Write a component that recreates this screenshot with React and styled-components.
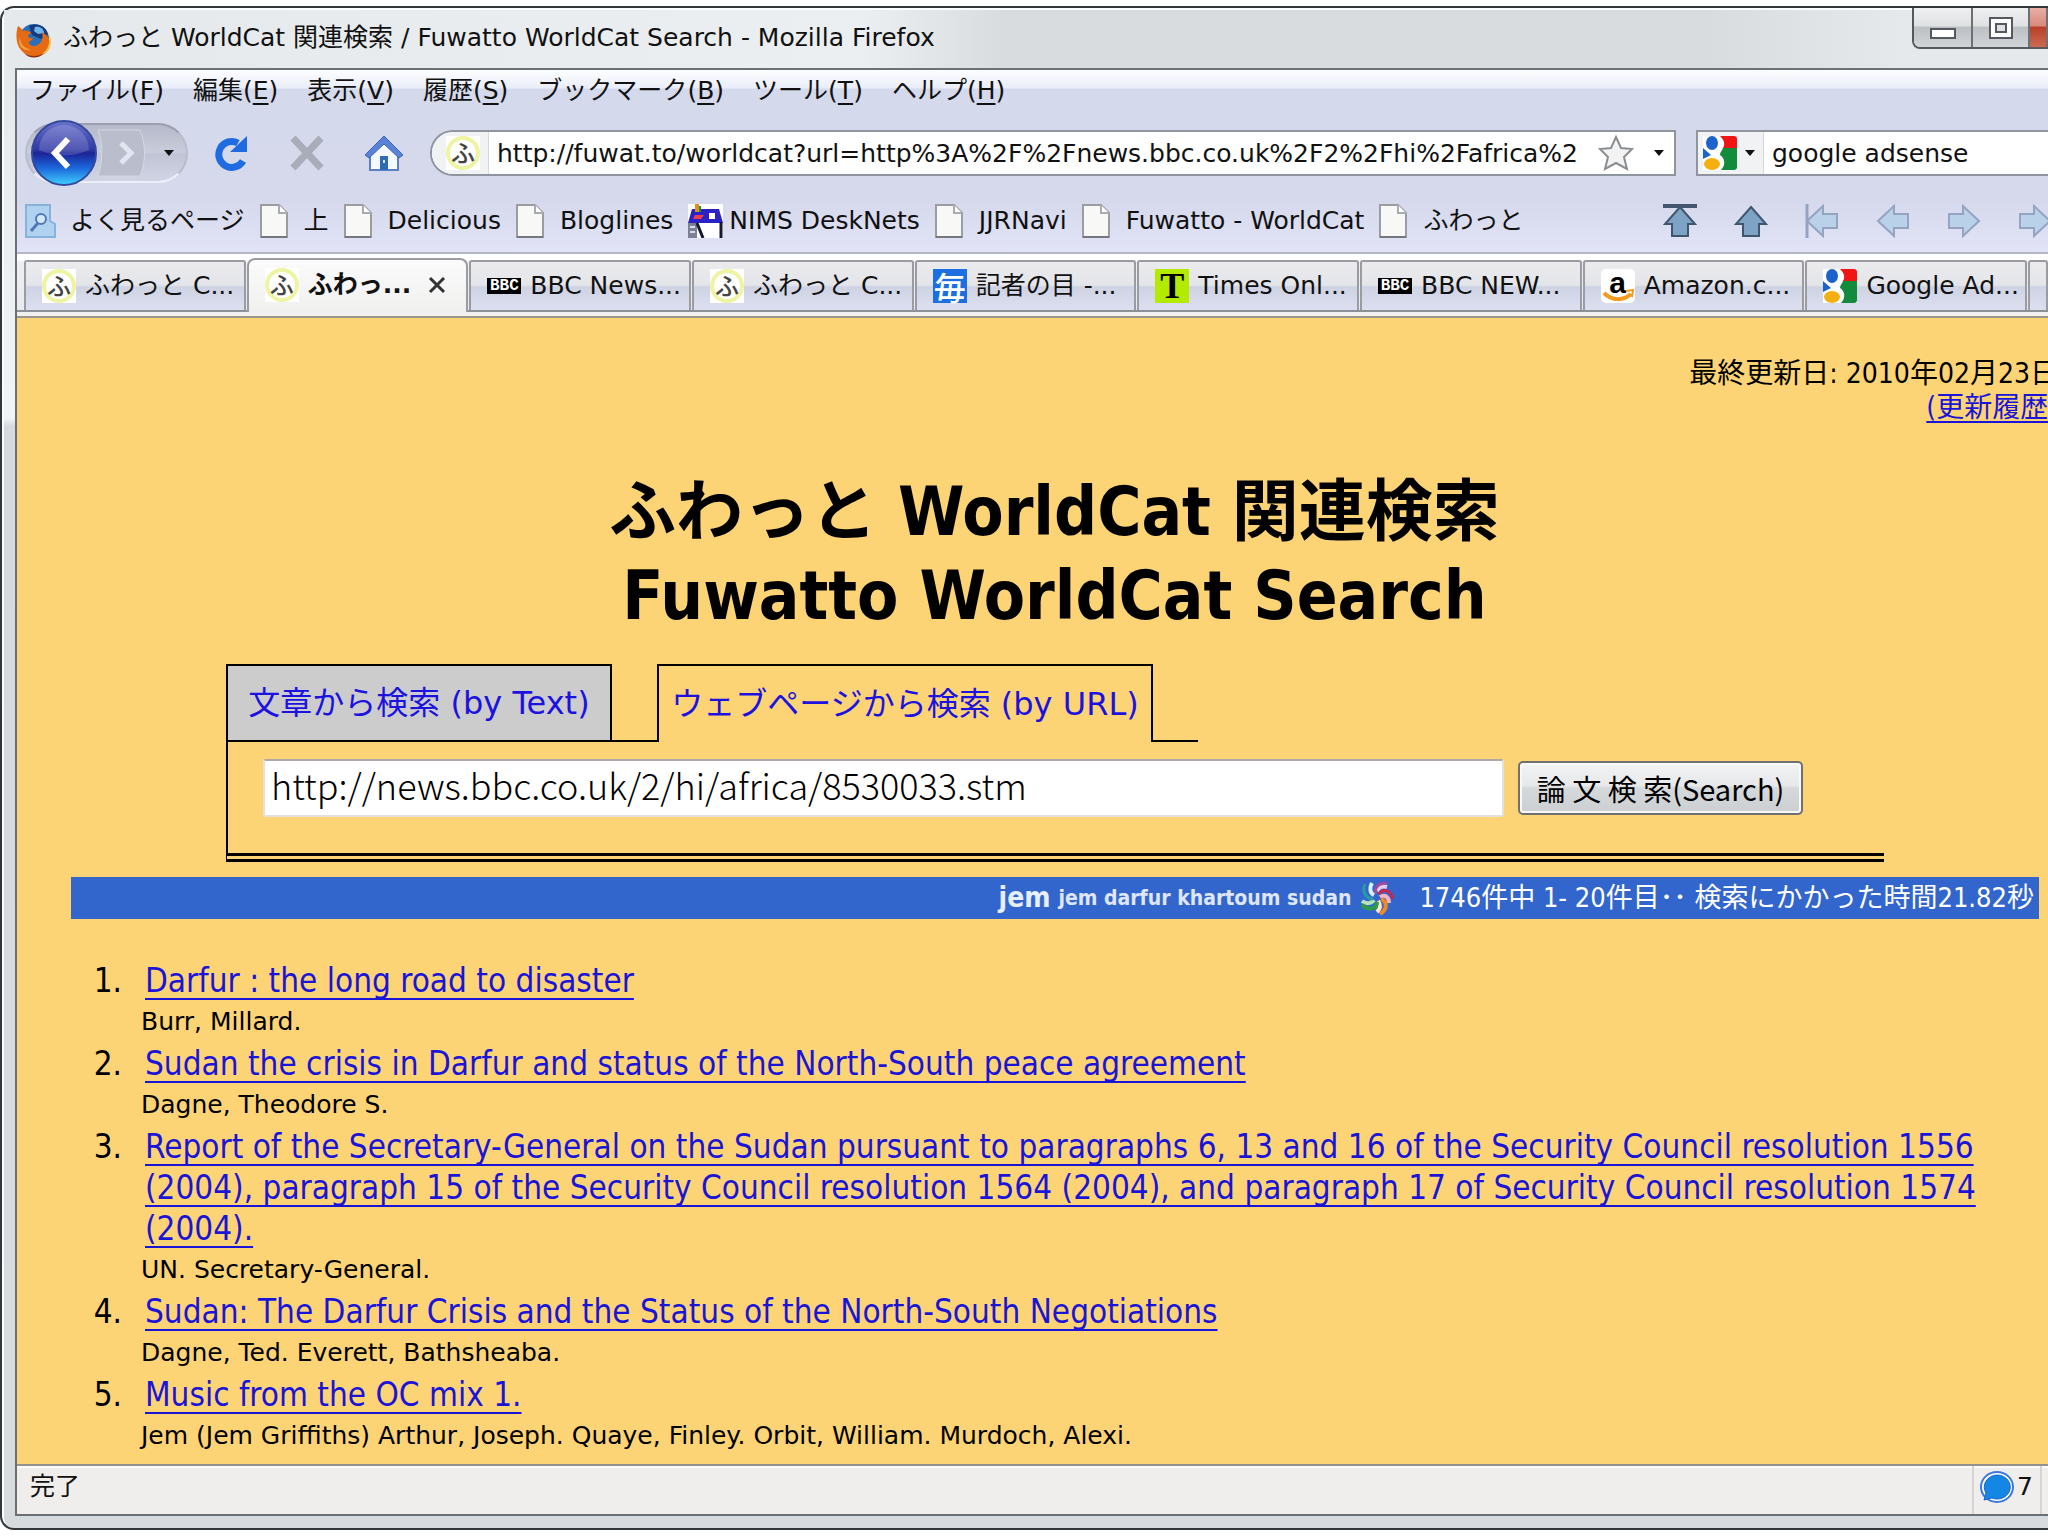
import React, { useState } from 'react'
import styled, { createGlobalStyle, css } from 'styled-components'

const uiFont = '"DejaVu Sans", "Noto Sans CJK JP", sans-serif'
const pageFont = '"DejaVu Sans Condensed", "DejaVu Sans", "Noto Sans CJK JP", sans-serif'
const gothic = '"Noto Sans CJK JP", "Noto Sans", sans-serif'

const GlobalStyle = createGlobalStyle`
  * { box-sizing: border-box; }
  body { margin: 0; background: #fff; overflow: hidden; }
  button, input { font: inherit; color: inherit; margin: 0; }
`

//****** Window frame ******

const Desktop = styled.div`
  display: flex;
  height: 100vh;
  padding: 6px 0;
  font-family: ${uiFont};
  font-size: 25px;
  line-height: 34px;
  color: #111;
  white-space: nowrap;
  overflow: hidden;
`

const Window = styled.div`
  flex: 1;
  min-width: 0;
  display: flex;
  flex-direction: column;
  padding: 0 0 12px 13px;
  border: 2px solid #33363a;
  border-right: none;
  border-radius: 14px 0 0 14px;
  box-shadow: inset 2px 2px 0 #fbfcfd;
  background: linear-gradient(#e4e7ea 0, #f1f4f7 410px, #d6dadf 418px, #d8dbde 100%);
`

const TitleBar = styled.header`
  display: flex;
  align-items: center;
  gap: 11px;
  height: 60px;
  flex: none;
  margin: 2px 0 -2px -11px;
  padding-left: 12px;
  background: linear-gradient(90deg, #e6e9eb 0, #eceff1 860px, #d8dcde 1000px, #d8dcde 1700px, #e6e9eb 1900px);
`

const Title = styled.span`
  flex: 1;
  padding-bottom: 4px;
`

const WindowButtons = styled.div`
  display: flex;
  align-self: flex-start;
  height: 41px;
  margin-top: -2px;
  border: 2px solid #55585c;
  border-top: none;
  border-right: none;
  border-radius: 0 0 0 8px;
  overflow: hidden;
`

const WindowButton = styled.button`
  width: ${p => p.$width || 59}px;
  padding: 0;
  display: flex;
  align-items: center;
  justify-content: center;
  border: none;
  border-right: 2px solid #6d7074;
  background: ${p => p.$close
    ? 'linear-gradient(#e8b0a4 0, #d98a7c 45%, #b8402a 50%, #cc6a52 100%)'
    : 'linear-gradient(#eef0f1 0, #dfe1e3 45%, #bcbfc3 50%, #d2d5d8 100%)'};
`

const Frame = styled.div`
  flex: 1;
  min-height: 0;
  display: flex;
  flex-direction: column;
  border: 2px solid #6b7077;
  border-right: none;
  background: #f0eeed;
`

//****** Toolbars ******

const Toolbox = styled.div`
  flex: none;
  border-bottom: 2px solid #b4b8c6;
  background: linear-gradient(#fdfeff 0, #e9edf8 18px, #d4d9eb 19px, #d5d9eb 130px, #e2e3f7 100%);
`

const MenuRow = styled.nav`
  display: flex;
  align-items: center;
  gap: 29px;
  height: 42px;
  padding-left: 13px;
`

const MenuButton = styled.button`
  padding: 0;
  border: none;
  background: none;
  u { text-underline-offset: 4px; text-decoration-thickness: 2px; }
`

const NavRow = styled.div`
  display: flex;
  align-items: center;
  height: 82px;
  padding-left: 8px;
`

const IconButton = styled.button`
  flex: none;
  display: flex;
  padding: 0;
  margin-right: ${p => p.$after || 0}px;
  border: none;
  background: none;
`

const BackForward = styled.div`
  flex: none;
  display: flex;
  align-items: center;
  width: 163px;
  height: 60px;
  margin-right: 24px;
  padding-left: 3px;
  border: 2px solid #b9bdcb;
  border-top-color: #9b9fae;
  border-bottom-color: #eceefa;
  border-radius: 30px;
  background: linear-gradient(#b5b9c9, #c9cddc 50%, #c0c4d5 51%, #d0d4e4);
`

const LocationBar = styled.div`
  flex: 1;
  min-width: 0;
  display: flex;
  align-items: center;
  height: 46px;
  margin-right: 20px;
  border: 2px solid #8f949f;
  border-radius: 23px 0 0 23px;
  background: #fff;
  overflow: hidden;
`

const SearchBar = styled(LocationBar)`
  flex: 0 0 352px;
  margin-right: 0;
  border-right: none;
  border-radius: 0;
`

const Identity = styled.span`
  flex: none;
  display: flex;
  align-items: center;
  align-self: stretch;
  justify-content: flex-end;
  gap: 8px;
  width: ${p => p.$width}px;
  padding-right: 8px;
  margin-right: 8px;
  border-right: 1px solid #d5d8de;
  background: #f1f2f4;
`

const BarInput = styled.input`
  flex: 1;
  min-width: 0;
  height: 40px;
  padding: 0;
  border: none;
  outline: none;
  background: none;
`

const Caret = styled.span`
  width: 0;
  border: 5px solid transparent;
  border-top: 6px solid #111;
  border-bottom: none;
`

const BookmarkRow = styled.nav`
  display: flex;
  align-items: center;
  gap: 15px;
  height: 58px;
  padding: 0 0 4px 8px;
`

const Bookmark = styled.button`
  display: flex;
  align-items: center;
  gap: ${p => p.$gap || 16}px;
  padding: 0;
  border: none;
  background: none;
`

const Arrows = styled.div`
  flex: 1;
  min-width: 0;
  display: flex;
  justify-content: flex-end;
  gap: 37px;
  margin-right: -4px;
`

//****** Browser tabs ******

const TabStrip = styled.div`
  flex: none;
  display: flex;
  align-items: flex-end;
  gap: 1px;
  height: 58px;
  padding-left: 7px;
  border-bottom: 2px solid #8d9095;
  background: linear-gradient(#fff 0, #fff 6px, #eeeff3 8px, #e8e9ee 100%);
`

const BrowserTab = styled.button`
  flex: ${p => p.$stub ? '0 0 20px' : '1 1 0'};
  min-width: 0;
  display: flex;
  align-items: center;
  gap: 9px;
  height: 50px;
  padding: 0 0 0 16px;
  border: 2px solid #9a9ca2;
  border-bottom: none;
  border-radius: 3px 3px 0 0;
  background: linear-gradient(#ebebed 0, #e4e5ea 48%, #ced3e3 52%, #dcdff0 100%);
  ${p => p.$active && css`
    height: 54px;
    margin-bottom: -2px;
    padding-bottom: 2px;
    font-weight: bold;
    border-radius: 8px 8px 0 0;
    background: linear-gradient(#fbfbfb, #f0f0ef);
  `}
`

const CloseMark = styled.span`
  display: flex;
  margin-left: 8px;
`

const StripEdge = styled.div`
  flex: none;
  height: 6px;
  border-bottom: 2px solid #98958a;
  background: #f0f0ef;
`

const Favicon = styled.span`
  flex: none;
  display: flex;
  align-items: center;
  justify-content: center;
  width: 34px;
  height: 34px;
  background: ${p => p.$bg || '#fff'};
`

const Ring = styled.span`
  width: 34px;
  height: 34px;
  border: 4px solid #eef4a4;
  border-radius: 50%;
  font: 500 24px/24px ${gothic};
  color: #444;
  text-align: center;
`

const Mainichi = styled.span`
  font: 500 32px/32px ${gothic};
  color: #fff;
`

const TimesLetter = styled.span`
  font: bold 36px/34px "Liberation Serif", serif;
  color: #000;
`

const BbcBlocks = styled.span`
  flex: none;
  width: 34px;
  height: 16px;
  background: #000;
  color: #fff;
  font: bold 16px/16px "Liberation Mono", monospace;
  text-align: center;
`

//****** Page ******

const Page = styled.main`
  flex: 1;
  min-height: 0;
  overflow: hidden;
  background: #fcd475;
  font-family: ${pageFont};
  color: #000;
`

const Updated = styled.div`
  margin: 39px -10px 0 0;
  font-size: 28px;
  text-align: right;
  a { color: #1a14d8; text-underline-offset: 4px; }
`

const Heading = styled.h1`
  margin: 45px -44px 26px 0;
  font-size: 67px;
  line-height: 84px;
  text-align: center;
`

const SearchForm = styled.form`
  margin: 0 164px 0 209px;
  border-left: 2px solid #000;
  border-bottom: 9px double #000;
`

const FormTabs = styled.div`
  display: flex;
  height: 78px;
`

const FormTab = styled.a`
  display: flex;
  align-items: center;
  justify-content: center;
  width: ${p => p.$width}px;
  border: 2px solid #000;
  ${p => p.$current ? 'border-bottom: none;' : 'border-left: none; background: #ccc;'}
  font-family: ${uiFont};
  font-size: 32px;
  color: #1c12e0;
  text-decoration: none;
`

const FormTabGap = styled.span`
  width: 45px;
  border-bottom: 2px solid #000;
`

const FormRow = styled.div`
  display: flex;
  align-items: center;
  gap: 14px;
  height: 111px;
  padding: 0 81px 20px 35px;
`

const UrlField = styled.input`
  flex: 1;
  min-width: 0;
  height: 58px;
  padding: 0 6px 8px;
  border: 2px solid #e4e0dc;
  border-top-color: #b0a8a8;
  border-radius: 3px;
  background: #fff;
  font: 300 36px/48px ${gothic};
`

const SubmitButton = styled.button`
  width: 285px;
  height: 54px;
  padding: 0;
  border: 2px solid #707070;
  border-radius: 5px;
  background: linear-gradient(#f3f4f4 0, #e6e8e9 45%, #d6d9dc 50%, #cbcfd2 100%);
  box-shadow: inset 0 0 0 2px #f8f9f9;
  font: 29px/34px ${gothic};
`

const ResultBar = styled.div`
  display: flex;
  align-items: center;
  justify-content: flex-end;
  height: 42px;
  margin: 15px 9px 41px 54px;
  padding-right: 5px;
  background: #3366cc;
  color: #fff;
`

const Query = styled.strong`
  margin-right: 8px;
  font-size: 28px;
  color: #e6eeff;
`

const Terms = styled.strong`
  margin-right: 9px;
  font-size: 21px;
  color: #dfe6fb;
`

const Count = styled.span`
  margin-left: 25px;
  font-size: 27px;
`

const Results = styled.ol`
  margin: 0 9px 0 54px;
  padding: 0;
  list-style: none;
  font-size: 33px;
  line-height: 41px;
  white-space: normal;
`

const Result = styled.li`
  display: grid;
  grid-template-columns: 51px 1fr;
  column-gap: 19px;
`

const Number = styled.span`
  text-align: right;
`

const BookLink = styled.a`
  display: block;
  padding-left: 4px;
  color: #1a14d8;
  text-underline-offset: 6px;
  text-decoration-thickness: 2px;
  text-decoration-skip-ink: none;
`

const Author = styled.div`
  font-family: ${uiFont};
  font-size: 25px;
  line-height: 42px;
`

const StatusBar = styled.footer`
  flex: none;
  display: flex;
  align-items: stretch;
  height: 50px;
  padding-left: 13px;
  border-top: 2px solid #96918c;
  box-shadow: inset 0 2px 0 #fbfbfb;
  background: #f0eeed;
`

const StatusText = styled.span`
  flex: 1;
  padding-top: 4px;
`

const Counter = styled.span`
  display: flex;
  gap: 3px;
  width: 70px;
  padding: 4px 0 0 6px;
  margin-right: 6px;
  border: 2px solid #d6d4d2;
  border-width: 0 2px;
`

//****** Icons ******

const FirefoxIcon = () => (
  <svg width="36" height="36" viewBox="0 0 36 36">
    <circle cx="18" cy="17" r="15" fill="#2a6fb8" />
    <path d="M13 4c8-4 17 0 19 8l-7 5-9-4z" fill="#173a7c" />
    <path d="M19 5c5-1 9 2 9 6l-6 1-4-3z" fill="#6fb7e8" />
    <path d="M2 4c2 1 4 3 5 5 3-1 6 0 8 2-1 1-3 2-3 3 0 2 3 2 5 2-1 3-4 3-4 5 1 4 8 4 11 0 3-3 3-7 2-11 7 4 10 11 7 17-5 9-21 10-28 1C-1 21 0 10 2 4z" fill="#e66a14" />
    <path d="M30 8c6 7 4 19-4 24 6-1 9-7 9-13 0-4-2-8-5-11z" fill="#f9c44a" />
    <path d="M4 13c-1 7 3 13 11 15-6 1-11-2-12-8z" fill="#f8a33c" />
    <path d="M8 31c6 4 14 4 20 0-5 6-15 6-20 0z" fill="#8c2c10" />
  </svg>
)

const BackIcon = () => (
  <svg width="68" height="68" viewBox="0 0 68 68">
    <defs>
      <linearGradient id="back" x1="0" y1="0" x2="0" y2="1">
        <stop offset="0" stopColor="#6a74cc" />
        <stop offset=".45" stopColor="#3038a4" />
        <stop offset=".5" stopColor="#1c2396" />
        <stop offset=".72" stopColor="#1a62d8" />
        <stop offset="1" stopColor="#3fd0ff" />
      </linearGradient>
    </defs>
    <circle cx="34" cy="34" r="32" fill="url(#back)" stroke="#34499c" strokeWidth="2" />
    <path d="M9 31a25 25 0 0 1 50 0c-15 7-35 7-50 0z" fill="#fff" opacity=".16" />
    <path d="M38 20 25 34l13 14" fill="none" stroke="#fff" strokeWidth="6" />
  </svg>
)

const ForwardIcon = () => (
  <svg width="52" height="52" viewBox="0 0 52 52">
    <path d="M0 3h42c6 14 6 32 0 46H0c5-14 5-32 0-46z" fill="#b9bdcc" stroke="#d5d8e4" strokeWidth="1" />
    <path d="M23 16l10 10-10 10" fill="none" stroke="#e3e6f1" strokeWidth="5" />
  </svg>
)

const ReloadIcon = () => (
  <svg width="36" height="36" viewBox="0 0 36 36">
    <path d="M26 8a13 13 0 1 0 5 18" fill="none" stroke="#1f6be0" strokeWidth="7" />
    <path d="M35 1v16H18z" fill="#1f6be0" />
  </svg>
)

const StopIcon = () => (
  <svg width="36" height="36" viewBox="0 0 36 36">
    <path d="M4 3l28 30M32 3 4 33" stroke="#a9adba" strokeWidth="7" />
  </svg>
)

const HomeIcon = () => (
  <svg width="40" height="36" viewBox="0 0 40 36">
    <path d="M6 17v18h28V17L20 5z" fill="#f4f8ff" stroke="#5c80c8" strokeWidth="2" />
    <path d="M20 1 1 20l4 3L20 9l15 14 4-3z" fill="#5a83d8" stroke="#3c62b4" strokeWidth="1" />
    <path d="M16 21h8v14h-8z" fill="#2f6cb4" />
    <path d="M20 25v3" stroke="#dceaff" strokeWidth="2" />
  </svg>
)

const StarIcon = () => (
  <svg width="36" height="36" viewBox="0 0 36 36">
    <path d="M18 2l5 11 11 1-8 8 3 12-11-6-11 6 3-12-8-8 11-1z" fill="#f3f3f4" stroke="#8b8e92" strokeWidth="2" />
  </svg>
)

const GoogleIcon = () => (
  <svg width="34" height="34" viewBox="0 0 34 34">
    <path fill="#fff" d="M0 0h34v34H0z" />
    <path d="M17 0h14c2 0 3 1 3 3v9H20c3-5 0-9-3-12z" fill="#f01414" />
    <path d="M20 12h14v19c0 2-1 3-3 3H18c5-5 4-12-1-15 0-3 2-4 3-7z" fill="#128c3c" />
    <ellipse cx="9" cy="7" rx="6" ry="7" fill="#1c62cc" />
    <ellipse cx="9" cy="28" rx="8" ry="6" fill="#f4b010" />
    <path d="M0 12l8 7-8 4z" fill="#1c62cc" />
  </svg>
)

const PageIcon = () => (
  <svg width="28" height="34" viewBox="0 0 28 34">
    <path d="M1 1h18l8 8v24H1z" fill="#f8f8f7" stroke="#9b9da2" strokeWidth="2" />
    <path d="M19 1v8h8" fill="#fff" stroke="#a9abb0" strokeWidth="2" />
    <path d="M1 33h26" stroke="#75777c" strokeWidth="2" />
  </svg>
)

const SmartIcon = () => (
  <svg width="31" height="34" viewBox="0 0 31 34">
    <path d="M1 1h24v16l5 3v13H1z" fill="#b0d2f0" stroke="#86b2dc" strokeWidth="2" />
    <circle cx="16" cy="15" r="5" fill="#d4e8fa" stroke="#4f79b4" strokeWidth="2" />
    <path d="M13 19l-7 8" stroke="#4f79b4" strokeWidth="3" />
  </svg>
)

const NimsIcon = () => (
  <svg width="35" height="34" viewBox="0 0 35 34">
    <path fill="#fff" d="M0 0h35v34H0z" />
    <path d="M4 5h27l4 14H0z" fill="#2a22c4" />
    <path d="M0 19h9v15H0z" fill="#7c8296" />
    <path d="M2 23h5M2 28h5" stroke="#dde" strokeWidth="2" />
    <path d="M9 19l6 15M33 18v16" stroke="#181830" strokeWidth="3" />
    <path d="M7 11h9l-3 4H5z" fill="#f03c50" />
    <path d="M21 9h6v6h-6z" fill="#fff" />
    <path d="M9 0v8" stroke="#e09018" strokeWidth="4" />
    <path d="M12 2v6" stroke="#258c3c" strokeWidth="2" />
  </svg>
)

const AmazonLogo = styled.span`
  position: relative;
  flex: none;
  width: 34px;
  height: 34px;
  border-radius: 5px;
  background: #fff;
  font: bold 30px/28px "Liberation Sans", sans-serif;
  color: #000;
  text-align: center;
  svg { position: absolute; left: 0; bottom: 0; }
`

const AmazonIcon = () => (
  <AmazonLogo>
    a
    <svg width="34" height="14" viewBox="0 0 34 14">
      <path d="M3 4c8 8 19 8 27 1" fill="none" stroke="#f59a1c" strokeWidth="4" />
      <path d="M25 2l7-1-1 7" fill="none" stroke="#f59a1c" strokeWidth="2" />
    </svg>
  </AmazonLogo>
)

const SwirlIcon = () => (
  <svg width="34" height="34" viewBox="0 0 34 34" fill="none" strokeWidth="4">
    <path d="M17 10c2-4 6-5 10-4" stroke="#e2cdec" />
    <path d="M16 13C14 7 18 2 27 2" stroke="#a04c9c" strokeWidth="3" />
    <path d="M20 16c5-3 9 0 9 6" stroke="#f6b4c0" />
    <path d="M19 13c4-6 12-4 14 5" stroke="#c42850" strokeWidth="3" />
    <path d="M18 20c3 4 2 8-1 11" stroke="#ffe6c4" />
    <path d="M21 18c7 3 6 11-1 15" stroke="#f28a20" />
    <path d="M14 19c-3 4-8 4-12 1" stroke="#b4e4b8" />
    <path d="M17 21c0 7-8 9-15 3" stroke="#2f9a48" />
    <path d="M14 14C10 12 9 7 12 2" stroke="#d4f0f4" />
    <path d="M13 18C5 17 2 10 5 3" stroke="#2a9aa4" strokeWidth="3" />
  </svg>
)

const BubbleIcon = () => (
  <svg width="34" height="34" viewBox="0 0 34 34">
    <ellipse cx="17" cy="17" rx="16" ry="15" fill="#fff" stroke="#3c78dc" strokeWidth="2" />
    <path d="M4 30l2-7a13 12 0 1 1 6 5z" fill="#1487e4" stroke="#1a62d0" strokeWidth="1" />
  </svg>
)

const arrowPaths = {
  up: 'M17 3l15 17h-7v12H9V20H2z',
  left: 'M2 17 18 2v8h14v14H18v8z',
  right: 'M32 17 16 2v8H2v14h14v8z',
}

const ArrowIcon = ({ dir, bar, off }) => (
  <svg width="34" height="34" viewBox="0 0 34 34">
    <path
      d={arrowPaths[dir]}
      fill={off ? '#b9d2ea' : '#7fa3c4'}
      stroke={off ? '#94a4c0' : '#3f566e'}
      strokeWidth="2"
    />
    {bar === 'top' && <path d="M0 2h34" stroke="#46566e" strokeWidth="4" />}
    {bar === 'left' && <path d="M2 0v34" stroke="#94a4c0" strokeWidth="3" />}
    {bar === 'right' && <path d="M32 0v34" stroke="#94a4c0" strokeWidth="3" />}
  </svg>
)

const FuIcon = () => <Favicon><Ring>ふ</Ring></Favicon>

const favicons = {
  fu: <FuIcon />,
  bbc: <BbcBlocks>BBC</BbcBlocks>,
  mainichi: <Favicon $bg="#1b6fe0"><Mainichi>毎</Mainichi></Favicon>,
  times: <Favicon $bg="#b4ea00"><TimesLetter>T</TimesLetter></Favicon>,
  amazon: <AmazonIcon />,
  google: <GoogleIcon />,
}

//****** Data ******

const menus = [
  ['ファイル', 'F'],
  ['編集', 'E'],
  ['表示', 'V'],
  ['履歴', 'S'],
  ['ブックマーク', 'B'],
  ['ツール', 'T'],
  ['ヘルプ', 'H'],
]

const bookmarks = ['上', 'Delicious', 'Bloglines', 'NIMS DeskNets', 'JJRNavi', 'Fuwatto - WorldCat', 'ふわっと']

const tabs = [
  { icon: 'fu', text: 'ふわっと C...' },
  { icon: 'fu', text: 'ふわっ...', active: true },
  { icon: 'bbc', text: 'BBC News...' },
  { icon: 'fu', text: 'ふわっと C...' },
  { icon: 'mainichi', text: '記者の目 -...' },
  { icon: 'times', text: 'Times Onl...' },
  { icon: 'bbc', text: 'BBC NEW...' },
  { icon: 'amazon', text: 'Amazon.c...' },
  { icon: 'google', text: 'Google Ad...' },
]

const books = [
  ['Darfur : the long road to disaster', 'Burr, Millard.'],
  ['Sudan the crisis in Darfur and status of the North-South peace agreement', 'Dagne, Theodore S.'],
  ['Report of the Secretary-General on the Sudan pursuant to paragraphs 6, 13 and 16 of the Security Council resolution 1556 (2004), paragraph 15 of the Security Council resolution 1564 (2004), and paragraph 17 of Security Council resolution 1574 (2004).', 'UN. Secretary-General.'],
  ['Sudan: The Darfur Crisis and the Status of the North-South Negotiations', 'Dagne, Ted. Everett, Bathsheaba.'],
  ['Music from the OC mix 1.', 'Jem (Jem Griffiths) Arthur, Joseph. Quaye, Finley. Orbit, William. Murdoch, Alexi.'],
]

const App = () => {
  const [address, setAddress] = useState('http://fuwat.to/worldcat?url=http%3A%2F%2Fnews.bbc.co.uk%2F2%2Fhi%2Fafrica%2')
  const [search, setSearch] = useState('google adsense')
  const [url, setUrl] = useState('http://news.bbc.co.uk/2/hi/africa/8530033.stm')

  return (
    <Desktop>
      <GlobalStyle />
      <Window>
        <TitleBar>
          <FirefoxIcon />
          <Title>ふわっと WorldCat 関連検索 / Fuwatto WorldCat Search - Mozilla Firefox</Title>
          <WindowButtons>
            <WindowButton aria-label="Minimize">
              <svg width="28" height="26"><path d="M2 14h24v9H2z" fill="#fff" stroke="#55585e" strokeWidth="2" /></svg>
            </WindowButton>
            <WindowButton aria-label="Maximize" $width={57}>
              <svg width="26" height="24">
                <path d="M2 2h22v20H2z" fill="#fff" stroke="#55585e" strokeWidth="2" />
                <path d="M8 8h10v8H8z" fill="#dfe1e3" stroke="#55585e" strokeWidth="2" />
              </svg>
            </WindowButton>
            <WindowButton aria-label="Close" $width={18} $close />
          </WindowButtons>
        </TitleBar>

        <Frame>
          <Toolbox>
            <MenuRow>
              {menus.map(([name, key]) => (
                <MenuButton key={key}>{name}(<u>{key}</u>)</MenuButton>
              ))}
            </MenuRow>
            <NavRow>
              <BackForward>
                <IconButton aria-label="Back"><BackIcon /></IconButton>
                <IconButton aria-label="Forward" $after={14}><ForwardIcon /></IconButton>
                <Caret />
              </BackForward>
              <IconButton aria-label="Reload" $after={41}><ReloadIcon /></IconButton>
              <IconButton aria-label="Stop" $after={39}><StopIcon /></IconButton>
              <IconButton aria-label="Home" $after={26}><HomeIcon /></IconButton>
              <LocationBar>
                <Identity $width={57}><FuIcon /></Identity>
                <BarInput aria-label="Address" value={address} onChange={e => setAddress(e.target.value)} />
                <IconButton aria-label="Bookmark this page" $after={20}><StarIcon /></IconButton>
                <IconButton aria-label="History" $after={10}><Caret /></IconButton>
              </LocationBar>
              <SearchBar>
                <Identity $width={66}><GoogleIcon /><Caret /></Identity>
                <BarInput aria-label="Search" value={search} onChange={e => setSearch(e.target.value)} />
              </SearchBar>
            </NavRow>
            <BookmarkRow>
              <Bookmark $gap={14}><SmartIcon />よく見るページ</Bookmark>
              {bookmarks.map(name => (
                <Bookmark key={name} $gap={name === 'NIMS DeskNets' ? 6 : 16}>
                  {name === 'NIMS DeskNets' ? <NimsIcon /> : <PageIcon />}
                  {name}
                </Bookmark>
              ))}
              <Arrows>
                <IconButton aria-label="Top"><ArrowIcon dir="up" bar="top" /></IconButton>
                <IconButton aria-label="Up"><ArrowIcon dir="up" /></IconButton>
                <IconButton aria-label="First"><ArrowIcon dir="left" bar="left" off /></IconButton>
                <IconButton aria-label="Previous"><ArrowIcon dir="left" off /></IconButton>
                <IconButton aria-label="Next"><ArrowIcon dir="right" off /></IconButton>
                <IconButton aria-label="Last"><ArrowIcon dir="right" bar="right" off /></IconButton>
              </Arrows>
            </BookmarkRow>
          </Toolbox>

          <TabStrip>
            {tabs.map((tab, i) => (
              <BrowserTab key={i} $active={tab.active}>
                {favicons[tab.icon]}
                {tab.text}
                {tab.active && (
                  <CloseMark>
                    <svg width="18" height="18"><path d="M2 2l14 14M16 2 2 16" stroke="#333" strokeWidth="3" /></svg>
                  </CloseMark>
                )}
              </BrowserTab>
            ))}
            <BrowserTab $stub aria-label="More tabs" />
          </TabStrip>
          <StripEdge />

          <Page>
            <Updated>
              最終更新日: 2010年02月23日<br />
              <a href="#history">(更新履歴)</a>
            </Updated>
            <Heading>
              ふわっと WorldCat 関連検索<br />
              Fuwatto WorldCat Search
            </Heading>
            <SearchForm onSubmit={e => e.preventDefault()}>
              <FormTabs>
                <FormTab href="#text" $width={384}>文章から検索 (by Text)</FormTab>
                <FormTabGap />
                <FormTab href="#url" $width={496} $current>ウェブページから検索 (by URL)</FormTab>
                <FormTabGap />
              </FormTabs>
              <FormRow>
                <UrlField aria-label="URL" value={url} onChange={e => setUrl(e.target.value)} />
                <SubmitButton type="submit">論 文 検 索(Search)</SubmitButton>
              </FormRow>
            </SearchForm>
            <ResultBar>
              <Query>jem</Query>
              <Terms>jem darfur khartoum sudan</Terms>
              <SwirlIcon />
              <Count>1746件中 1- 20件目･･ 検索にかかった時間21.82秒</Count>
            </ResultBar>
            <Results>
              {books.map(([title, author], i) => (
                <Result key={title}>
                  <Number>{i + 1}.</Number>
                  <div>
                    <BookLink href={'#book' + (i + 1)}>{title}</BookLink>
                    <Author>{author}</Author>
                  </div>
                </Result>
              ))}
            </Results>
          </Page>

          <StatusBar>
            <StatusText>完了</StatusText>
            <Counter><BubbleIcon />7</Counter>
          </StatusBar>
        </Frame>
      </Window>
    </Desktop>
  )
}

export default App
